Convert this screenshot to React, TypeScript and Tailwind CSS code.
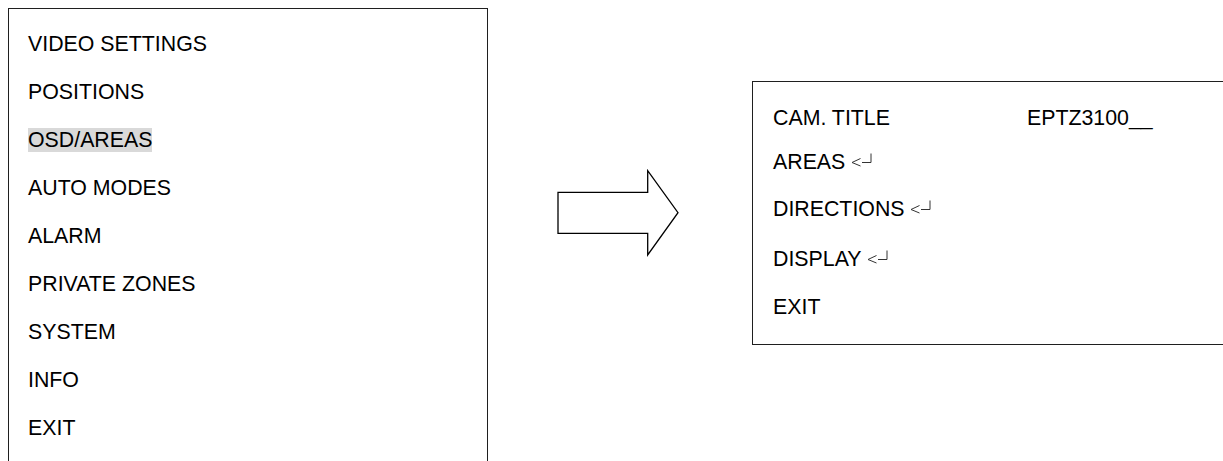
const mainMenu = [
  'VIDEO SETTINGS',
  'POSITIONS',
  'OSD/AREAS',
  'AUTO MODES',
  'ALARM',
  'PRIVATE ZONES',
  'SYSTEM',
  'INFO',
  'EXIT',
];

function EnterMark() {
  return (
    <svg
      width="21"
      height="16"
      viewBox="0 0 21 16"
      className="inline-block align-baseline"
      fill="none"
      stroke="#333"
      strokeWidth={1}
    >
      <path d="M9.5 5.5L1 9.5L9.5 13" />
      <path d="M11 9.5H20V0.5" />
    </svg>
  );
}

function ArrowRight() {
  return (
    <svg width="125" height="88" viewBox="0 0 125 88" fill="none" className="shrink-0">
      <path
        d="M2 23.3H91.7V1.7L122 43.7L91.7 86V64.3H2Z"
        stroke="#000"
        strokeWidth={1.3}
        strokeLinejoin="miter"
      />
    </svg>
  );
}

export default function App() {
  return (
    <div
      className="flex h-[461px] w-[1223px] overflow-hidden bg-white text-black"
      style={{ fontFamily: '"Liberation Sans", Arial, sans-serif' }}
    >
      {/* main menu */}
      <div className="ml-2 mt-2 flex w-[480px] shrink-0 flex-col gap-6 border-x border-t border-[#1f1f1f] pl-[19px] pt-[22.5px] pb-6 self-start">
        {mainMenu.map((item) => (
          <div key={item} className="text-[21.33px] leading-[24px] whitespace-nowrap">
            {item === 'OSD/AREAS' ? <span className="bg-[#d9d9d9]">{item}</span> : item}
          </div>
        ))}
      </div>

      <div className="ml-[68px] mt-[169px]">
        <ArrowRight />
      </div>

      {/* OSD/AREAS submenu */}
      <div className="ml-[71px] mt-[81px] flex h-[264px] w-[480px] shrink-0 flex-col border-y border-l border-[#1f1f1f] pl-[20px] pt-[24px] text-[21.33px] leading-[24px] self-start">
        <div className="flex whitespace-nowrap">
          <span className="w-[254px]">CAM. TITLE</span>
          <span>EPTZ3100__</span>
        </div>
        <div className="mt-[20px] whitespace-nowrap">
          AREAS <EnterMark />
        </div>
        <div className="mt-[23px] whitespace-nowrap">
          DIRECTIONS <EnterMark />
        </div>
        <div className="mt-[26px] whitespace-nowrap">
          DISPLAY <EnterMark />
        </div>
        <div className="mt-[24px] whitespace-nowrap">EXIT</div>
      </div>
    </div>
  );
}
